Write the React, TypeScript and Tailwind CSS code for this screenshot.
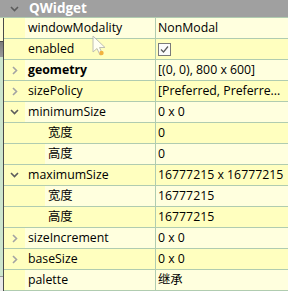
import type { ReactNode } from "react";

type Prop = {
  name: string;
  value?: string;
  child?: boolean;
  arrow?: "down" | "right";
  bold?: boolean;
  check?: boolean;
};

const rows: Prop[] = [
  { name: "windowModality", value: "NonModal" },
  { name: "enabled", check: true },
  { name: "geometry", value: "[(0, 0), 800 x 600]", arrow: "right", bold: true },
  { name: "sizePolicy", value: "[Preferred, Preferre...", arrow: "right" },
  { name: "minimumSize", value: "0 x 0", arrow: "down" },
  { name: "宽度", value: "0", child: true },
  { name: "高度", value: "0", child: true },
  { name: "maximumSize", value: "16777215 x 16777215", arrow: "down" },
  { name: "宽度", value: "16777215", child: true },
  { name: "高度", value: "16777215", child: true },
  { name: "sizeIncrement", value: "0 x 0", arrow: "right" },
  { name: "baseSize", value: "0 x 0", arrow: "right" },
  { name: "palette", value: "继承" },
];

function Chevron({ dir }: { dir: "down" | "right" }) {
  const color = dir === "down" ? "#5c5c5c" : "#a3a3a3";
  if (dir === "down") {
    return (
      <svg width="9" height="6" viewBox="0 0 9 6" className="shrink-0">
        <path d="M1 1 L4.5 4.5 L8 1" fill="none" stroke={color} strokeWidth="1.6" />
      </svg>
    );
  }
  return (
    <svg width="6" height="9" viewBox="0 0 6 9" className="shrink-0">
      <path d="M1 1 L4.5 4.5 L1 8" fill="none" stroke={color} strokeWidth="1.6" />
    </svg>
  );
}

function CheckBox() {
  return (
    <svg width="13" height="13" viewBox="0 0 13 13">
      <rect x="0.5" y="0.5" width="12" height="12" fill="#fbfbfb" stroke="#7a7a7a" />
      <path d="M3 6.5 L5.5 9 L10 3.5" fill="none" stroke="#5a5a5a" strokeWidth="1.2" />
    </svg>
  );
}

function Row({ p, alt }: { p: Prop; alt: boolean }) {
  const cell = alt ? "bg-[#ffffde]" : "bg-[#ffffbf]";
  let branch: ReactNode = null;
  if (p.arrow === "down") branch = <div className="pl-[6px]"><Chevron dir="down" /></div>;
  if (p.arrow === "right") branch = <div className="pl-[8px]"><Chevron dir="right" /></div>;
  return (
    <div className="flex h-[21px] border-b border-[#b0ccb0]">
      <div className="flex w-[152px] border-r border-[#b0ccb0]">
        <div className={`flex items-center bg-[#ffffbf] ${p.child ? "w-[41px]" : "w-[21px]"}`}>{branch}</div>
        <div className={`flex flex-1 items-center pl-[3px] ${cell} ${p.bold ? "font-bold" : ""}`}>{p.name}</div>
      </div>
      <div className={`flex flex-1 items-center pl-[2px] whitespace-nowrap ${cell}`}>
        {p.check ? <CheckBox /> : p.value}
      </div>
    </div>
  );
}

function Cursor() {
  return (
    <svg width="18" height="24" viewBox="0 0 18 24" className="absolute left-[92px] top-[35px] opacity-80">
      <path d="M1 1 L1 17 L5 13.5 L8 20 L10.5 19 L7.5 12.5 L13 12.5 Z" fill="#ffffff" stroke="#b0b0b0" strokeWidth="1" />
      <circle cx="9.5" cy="18" r="2.2" fill="#f0a020" />
    </svg>
  );
}

export default function App() {
  return (
    <div
      className="relative w-[288px] h-[291px] overflow-hidden bg-white text-[12.3px] text-black"
      style={{ fontFamily: '"Open Sans", "Noto Sans CJK SC", sans-serif' }}
    >
      <div className="flex h-[18px] items-center border-b border-[#b0ccb0] bg-[#a0a0a0] text-[13.5px] font-bold text-white">
        <div className="w-[29px] pl-[10px]">
          <Chevron dir="down" />
        </div>
        <span>QWidget</span>
      </div>
      <div className="flex">
        <div className="flex w-[4px] border-r border-[#4a4a4a]">
          <div className="flex w-[3px] flex-col">
            <div className="h-[23px] bg-[#fdfdd2]" />
            <div className="h-[1px] bg-[#4a4a4a]" />
            <div className="h-[15px] bg-gradient-to-b from-[#7c7c7c] to-[#9a9a9a]" />
            <div className="h-[219px] bg-[#cde6cd]" />
            <div className="h-[1px] bg-[#9a9a9a]" />
            <div className="h-[14px] bg-[#e8e8e8]" />
          </div>
        </div>
        <div className="flex-1">
          {rows.map((p, i) => (
            <Row key={i} p={p} alt={i % 2 === 0} />
          ))}
        </div>
      </div>
      <Cursor />
    </div>
  );
}
